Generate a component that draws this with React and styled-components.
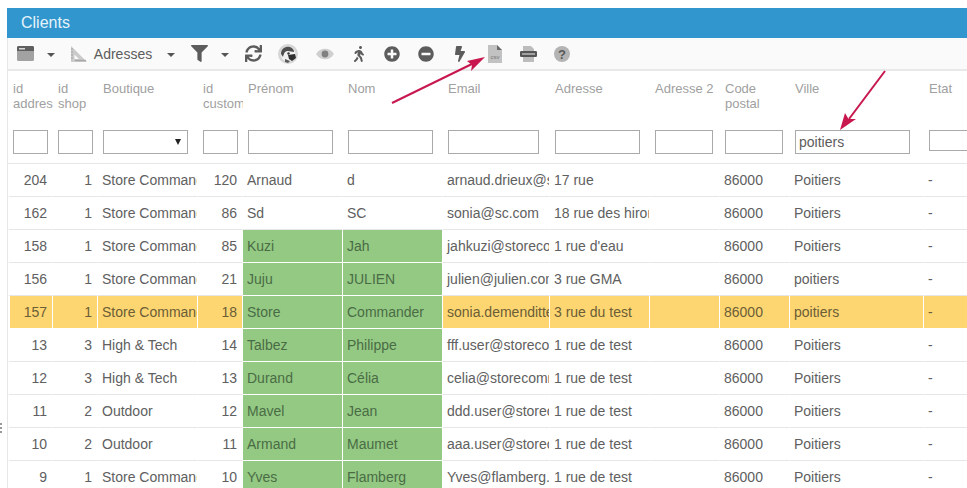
import React from "react";
import styled, { createGlobalStyle } from "styled-components";
import {
  FaBolt,
  FaFilter,
  FaMinusCircle,
  FaPlusCircle,
  FaSync,
  FaWalking,
} from "react-icons/fa";

const GRID = "45px 45px 100px 45px 100px 100px 107px 100px 70px 70px 134px 60px";

const Global = createGlobalStyle`
  html, body {
    margin: 0;
    padding: 0;
    background: #fff;
    overflow: hidden;
    font-family: "Liberation Sans", Arial, sans-serif;
  }
  * { box-sizing: border-box; }
`;

const Page = styled.div`
  position: relative;
  width: 967px;
  height: 488px;
  padding: 8px 0 0 7px;
  overflow: hidden;
`;

const TitleBar = styled.div`
  height: 30px;
  background: #3196cd;
  color: #e6f3fb;
  font-size: 16px;
  line-height: 29px;
  padding-left: 14px;
`;

const Body = styled.div`
  border-left: 1px solid #e6e6e6;
`;

const Toolbar = styled.div`
  display: flex;
  align-items: center;
  height: 33px;
  background: #fafafa;
  border-bottom: 2px solid #e8e8e8;
  color: #5c5c5c;
`;

const ToolButton = styled.div`
  display: flex;
  flex: none;
  align-items: center;
  justify-content: center;
  gap: 7px;
  width: ${(p) => p.$w || 34}px;
  height: 31px;
  font-size: 14px;
  color: ${(p) => p.$color || "#5c5c5c"};
`;

const Caret = styled.span`
  display: block;
  width: 0;
  height: 0;
  margin-top: 2px;
  border-left: 4px solid transparent;
  border-right: 4px solid transparent;
  border-top: 4px solid #555;
`;

const Row = styled.div`
  display: grid;
  grid-template-columns: ${GRID};
  width: max-content;
`;

const HeadCell = styled.div`
  height: 93px;
  padding: 10px 0 0 5px;
  border-bottom: 1px solid #e6e6e6;
  overflow: hidden;
`;

const Label = styled.div`
  height: 49px;
  font-size: 13px;
  line-height: 15px;
  color: #a0a0a0;
`;

const FilterInput = styled.input`
  display: block;
  width: ${(p) => p.$w}px;
  height: ${(p) => p.$h || 24}px;
  padding: 0 3px;
  border: 1px solid #aaa;
  border-radius: 0;
  outline: none;
  background: #fff;
  color: #5c5c5c;
  font: 14px "Liberation Sans", Arial, sans-serif;
`;

const FilterSelect = styled.div`
  display: flex;
  align-items: center;
  justify-content: flex-end;
  width: ${(p) => p.$w}px;
  height: 24px;
  padding-right: 6px;
  border: 1px solid #aaa;
  background: #fff;
`;

const SelectArrow = styled.span`
  display: block;
  width: 0;
  height: 0;
  border-left: 3.5px solid transparent;
  border-right: 3.5px solid transparent;
  border-top: 6px solid #222;
`;

const tones = {
  plain: { bg: "#fff", fg: "#606060", line: "#e6e6e6" },
  green: { bg: "#94c983", fg: "#4a6c45", line: "#fff" },
  amber: { bg: "#fdd672", fg: "#6b5d36", line: "#fff" },
};

const Cell = styled.div`
  height: 33px;
  padding: 0 ${(p) => (p.$num ? 5 : 0)}px 0 ${(p) => (p.$num ? 0 : 4)}px;
  border-bottom: 1px solid ${(p) => tones[p.$tone].line};
  border-right: 1px solid ${(p) => (p.$tone === "plain" ? "transparent" : "#fff")};
  background: ${(p) => tones[p.$tone].bg};
  color: ${(p) => tones[p.$tone].fg};
  font-size: 14px;
  line-height: 32px;
  text-align: ${(p) => (p.$num ? "right" : "left")};
  white-space: nowrap;
  overflow: hidden;

  &:first-child {
    border-left: 2px solid #fff;
  }
`;

const Arrows = styled.svg`
  position: absolute;
  left: 0;
  top: 0;
  pointer-events: none;
`;

const DragDots = styled.div`
  position: absolute;
  left: 0;
  top: 423px;
  width: 2px;
  height: 10px;
  background: repeating-linear-gradient(#999 0 2px, #fff 2px 4px);
`;

function WindowIcon() {
  return (
    <svg width="17" height="15" viewBox="0 0 17 15">
      <rect x="0" y="0" width="17" height="15" rx="1.5" fill="#a2a2a2" />
      <path d="M0 5 V1.5 A1.5 1.5 0 0 1 1.5 0 H15.5 A1.5 1.5 0 0 1 17 1.5 V5 Z" fill="#5f5f5f" />
      <rect x="2" y="2" width="6" height="1.5" fill="#d8d8d8" />
    </svg>
  );
}

function RulerIcon() {
  return (
    <svg width="17" height="16" viewBox="0 0 17 16">
      <path d="M1 0 L17 16 L1 16 Z M4.5 8.5 L4.5 13 L9 13 Z" fill="#cacaca" fillRule="evenodd" />
      <path d="M1 3 H3 M1 6 H3 M1 9 H3 M1 12 H3" stroke="#9a9a9a" strokeWidth="0.8" />
      <path d="M5 14.5 H16" stroke="#a8a8a8" strokeWidth="1.4" />
    </svg>
  );
}

function MascotIcon() {
  return (
    <svg width="20" height="20" viewBox="0 0 20 20">
      <circle cx="10" cy="10" r="10" fill="#d6d6d6" />
      <circle cx="10" cy="10" r="7.5" fill="#f1f1f1" />
      <path d="M3 10 C3 4 8 2 12 3 C15 4 16 6 16 8 L10 7 C7 7 6 9 5 13 Z" fill="#4f4f4f" />
      <path d="M10 11 L17 10 L18 14 L14 17 L11 15 Z" fill="#2f2f2f" />
      <path d="M7 15 L12 17 L10 19 L7 18 Z" fill="#5a5a5a" />
      <circle cx="10.5" cy="9.5" r="1.2" fill="#333" />
    </svg>
  );
}

function EyeIcon() {
  return (
    <svg width="18" height="12" viewBox="0 0 18 12">
      <path d="M0 6 C4 -1 14 -1 18 6 C14 13 4 13 0 6 Z" fill="#cfcfcf" />
      <circle cx="9" cy="6" r="3.4" fill="#808080" />
    </svg>
  );
}

function CsvIcon() {
  return (
    <svg width="14" height="18" viewBox="0 0 14 18">
      <path d="M0 0 H9 L14 5 V18 H0 Z" fill="#c2c2c2" />
      <path d="M9 0 L14 5 H9 Z" fill="#6a6a6a" />
      <text x="7" y="14" fontSize="6" textAnchor="middle" fill="#777" fontFamily="Liberation Sans">
        csv
      </text>
    </svg>
  );
}

function PrintIcon() {
  return (
    <svg width="17" height="16" viewBox="0 0 17 16">
      <path d="M3 0 H11 L14 3 V6 H3 Z" fill="#bdbdbd" />
      <rect x="0" y="5" width="17" height="6" rx="1.2" fill="#555" />
      <rect x="2" y="7.5" width="13" height="1" fill="#eee" />
      <rect x="3" y="11" width="11" height="5" fill="#bdbdbd" />
    </svg>
  );
}

function HelpIcon() {
  return (
    <svg width="16" height="16" viewBox="0 0 16 16">
      <circle cx="8" cy="8" r="8" fill="#b4b4b4" />
      <text x="8" y="12.5" fontSize="13" fontWeight="700" textAnchor="middle" fill="#585858" fontFamily="Liberation Sans">
        ?
      </text>
    </svg>
  );
}

const columns = [
  { label: "id address", w: 35 },
  { label: "id shop", w: 35 },
  { label: "Boutique", w: 85, select: true },
  { label: "id customer", w: 35 },
  { label: "Prénom", w: 85 },
  { label: "Nom", w: 85 },
  { label: "Email", w: 91 },
  { label: "Adresse", w: 85 },
  { label: "Adresse 2", w: 58 },
  { label: "Code postal", w: 58 },
  { label: "Ville", w: 115, value: "poitiers" },
  { label: "Etat", w: 60, h: 21 },
];

const SC = "Store Commander";
const HT = "High & Tech";

const rows = [
  [204, 1, SC, 120, "Arnaud", "d", "arnaud.drieux@storecommander.com", "17 rue", "Poitiers", "plain"],
  [162, 1, SC, 86, "Sd", "SC", "sonia@sc.com", "18 rue des hirondelles", "Poitiers", "plain"],
  [158, 1, SC, 85, "Kuzi", "Jah", "jahkuzi@storecommander.com", "1 rue d'eau", "Poitiers", "green"],
  [156, 1, SC, 21, "Juju", "JULIEN", "julien@julien.com", "3 rue GMA", "poitiers", "green"],
  [157, 1, SC, 18, "Store", "Commander", "sonia.demenditte@storecommander.com", "3 rue du test", "poitiers", "amber"],
  [13, 3, HT, 14, "Talbez", "Philippe", "fff.user@storecommander.com", "1 rue de test", "Poitiers", "green"],
  [12, 3, HT, 13, "Durand", "Célia", "celia@storecommander.com", "1 rue de test", "Poitiers", "green"],
  [11, 2, "Outdoor", 12, "Mavel", "Jean", "ddd.user@storecommander.com", "1 rue de test", "Poitiers", "green"],
  [10, 2, "Outdoor", 11, "Armand", "Maumet", "aaa.user@storecommander.com", "1 rue de test", "Poitiers", "green"],
  [9, 1, SC, 10, "Yves", "Flamberg", "Yves@flamberg.com", "1 rue de test", "Poitiers", "green"],
];

function DataRow({ row }) {
  const [idA, shop, store, cust, first, last, email, addr, city, mark] = row;
  // only the name columns are green, the amber row keeps them green too
  const base = mark === "amber" ? "amber" : "plain";
  const names = mark === "plain" ? "plain" : "green";
  return (
    <Row>
      <Cell $tone={base} $num>{idA}</Cell>
      <Cell $tone={base} $num>{shop}</Cell>
      <Cell $tone={base}>{store}</Cell>
      <Cell $tone={base} $num>{cust}</Cell>
      <Cell $tone={names}>{first}</Cell>
      <Cell $tone={names}>{last}</Cell>
      <Cell $tone={base}>{email}</Cell>
      <Cell $tone={base}>{addr}</Cell>
      <Cell $tone={base} />
      <Cell $tone={base}>86000</Cell>
      <Cell $tone={base}>{city}</Cell>
      <Cell $tone={base}>-</Cell>
    </Row>
  );
}

export default function App() {
  return (
    <Page>
      <Global />
      <TitleBar>Clients</TitleBar>
      <Body>
        <Toolbar>
          <ToolButton><WindowIcon /></ToolButton>
          <ToolButton $w={18}><Caret /></ToolButton>
          <ToolButton $w={102}><RulerIcon />Adresses</ToolButton>
          <ToolButton $w={18}><Caret /></ToolButton>
          <ToolButton $w={38}><FaFilter size={17} /></ToolButton>
          <ToolButton $w={14}><Caret /></ToolButton>
          <ToolButton $w={42}><FaSync size={17} /></ToolButton>
          <ToolButton $w={28}><MascotIcon /></ToolButton>
          <ToolButton $w={45}><EyeIcon /></ToolButton>
          <ToolButton $w={24}><FaWalking size={16} /></ToolButton>
          <ToolButton $w={42}><FaPlusCircle size={16} /></ToolButton>
          <ToolButton $w={26}><FaMinusCircle size={16} /></ToolButton>
          <ToolButton $w={42}><FaBolt size={16} /></ToolButton>
          <ToolButton $w={28}><CsvIcon /></ToolButton>
          <ToolButton $w={38}><PrintIcon /></ToolButton>
          <ToolButton $w={30}><HelpIcon /></ToolButton>
        </Toolbar>
        <Row>
          {columns.map((c) => (
            <HeadCell key={c.label}>
              <Label>{c.label}</Label>
              {c.select ? (
                <FilterSelect $w={c.w}><SelectArrow /></FilterSelect>
              ) : (
                <FilterInput $w={c.w} $h={c.h} defaultValue={c.value} />
              )}
            </HeadCell>
          ))}
        </Row>
        {rows.map((r) => (
          <DataRow key={r[0]} row={r} />
        ))}
      </Body>
      <DragDots />
      <Arrows width="967" height="488" viewBox="0 0 967 488">
        <line x1="392" y1="103" x2="476" y2="62" stroke="#c8174f" strokeWidth="2" />
        <path d="M485 57 L467 61 L472 65 L471 71 Z" fill="#c8174f" />
        <line x1="885" y1="71" x2="849" y2="119" stroke="#c8174f" strokeWidth="2" />
        <path d="M840 130 L845 113 L848.5 119 L856 119 Z" fill="#c8174f" />
      </Arrows>
    </Page>
  );
}
